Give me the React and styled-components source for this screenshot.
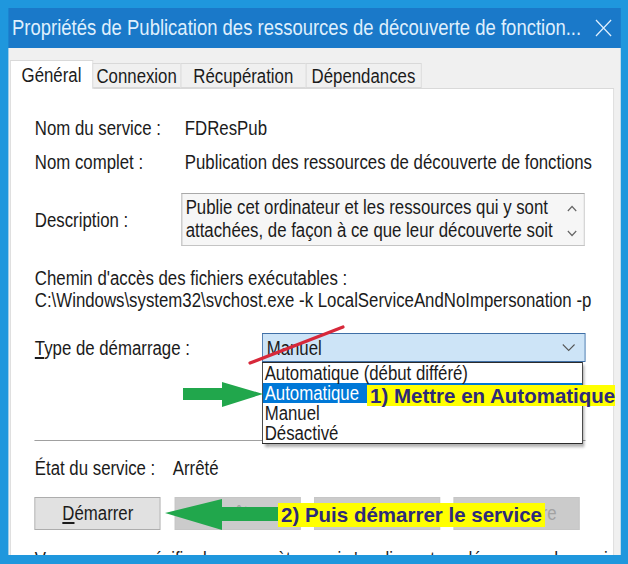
import React from "react";
import styled, { createGlobalStyle } from "styled-components";

/* The reference is a horizontally squeezed screenshot: the dialog is laid
   out at full width on a stage and squeezed by S. */
const S = 0.84;
const u = (x) => `${(x / S).toFixed(2)}px`;

const Global = createGlobalStyle`
  html, body { margin: 0; padding: 0; background: #1f97dd; overflow: hidden; }
  #root { width: 628px; height: 564px; }
`;

const Frame = styled.div`
  position: relative;
  width: 628px;
  height: 564px;
  overflow: hidden;
  background: #1f97dd;
`;

const Stage = styled.div`
  width: ${u(628)};
  height: 564px;
  box-sizing: border-box;
  padding: 8px ${u(7)} 9px ${u(8)};
  transform: scaleX(${S});
  transform-origin: 0 0;
  display: flex;
  flex-direction: column;
  font-family: "Liberation Sans", Arial, sans-serif;
  color: #1b1b1b;
`;

const TitleBar = styled.div`
  height: 40px;
  flex: none;
  background: #1a79c9;
  display: flex;
  align-items: center;
  justify-content: space-between;
  padding: 0 ${u(9)} 0 ${u(4)};
`;

const Title = styled.span`
  font-size: 22px;
  color: #dfeffd;
  white-space: nowrap;
`;

const Body = styled.div`
  flex: 1;
  min-height: 0;
  background: #f0f0f0;
  padding: 12px ${u(7)} 0 ${u(2)};
  display: flex;
  flex-direction: column;
  overflow: hidden;
`;

const TabRow = styled.div`
  display: flex;
  align-items: flex-end;
  height: 28px;
  flex: none;
  position: relative;
  z-index: 1;
`;

const Tab = styled.div`
  box-sizing: border-box;
  width: ${(p) => u(p.$w)};
  height: ${(p) => (p.$active ? 29 : 25)}px;
  margin-bottom: ${(p) => (p.$active ? -1 : 0)}px;
  margin-left: ${(p) => (p.$first ? 0 : -1)}px;
  background: ${(p) => (p.$active ? "#ffffff" : "#f0f0f0")};
  border: 1px solid #d9d9d9;
  border-bottom: ${(p) => (p.$active ? "none" : "1px solid #d9d9d9")};
  font-size: 20px;
  display: flex;
  align-items: center;
  justify-content: center;
  padding-top: ${(p) => (p.$active ? 0 : 1)}px;
`;

const Panel = styled.div`
  flex: 1;
  background: #ffffff;
  border: 1px solid #d9d9d9;
  padding: 0 ${u(28)} 0 ${u(24)};
  position: relative;
  display: flex;
  flex-direction: column;
  font-size: 20px;
`;

const Row = styled.div`
  display: flex;
  align-items: center;
  margin-top: ${(p) => p.$mt}px;
  line-height: 24px;
  white-space: nowrap;
`;

const Label = styled.div`
  width: ${(p) => u(p.$w)};
  flex: none;
`;

const Line = styled.div`
  margin-top: ${(p) => p.$mt || 0}px;
  line-height: 22px;
  white-space: nowrap;
`;

const TextBox = styled.div`
  width: ${u(403)};
  height: 53px;
  box-sizing: border-box;
  border: 1px solid #c4c4c4;
  border-top-color: #a9a9a9;
  border-left-color: #a9a9a9;
  background: #f6f6f6;
  display: flex;
  line-height: 23px;
`;

const TextBoxText = styled.div`
  flex: 1;
  padding: 2px 0 0 ${u(3)};
  white-space: nowrap;
  overflow: hidden;
`;

const Scroll = styled.div`
  width: ${u(24)};
  display: flex;
  flex-direction: column;
  align-items: center;
  justify-content: space-between;
  padding: 11px 0 8px;
`;

const U = styled.span`
  text-decoration: underline;
  text-underline-offset: 2px;
`;

const SelectWrap = styled.div`
  position: relative;
  width: ${u(324)};
`;

const Select = styled.div`
  height: 29px;
  box-sizing: border-box;
  border: 1px solid #3f6fa6;
  background: #cde4f7;
  display: flex;
  align-items: center;
  justify-content: space-between;
  padding: 0 ${u(9)} 0 ${u(4)};
`;

const List = styled.div`
  position: absolute;
  top: 29px;
  left: 0;
  width: ${u(321)};
  box-sizing: border-box;
  background: #ffffff;
  border: 1px solid #2b2b2b;
  box-shadow: 3px 3px 3px rgba(0, 0, 0, 0.35);
  z-index: 2;
`;

const Item = styled.div`
  line-height: 20px;
  padding-left: ${u(2)};
  background: ${(p) => (p.$sel ? "#0078d7" : "transparent")};
  color: ${(p) => (p.$sel ? "#ffffff" : "#1b1b1b")};
`;

const Separator = styled.div`
  margin-top: 78px;
  height: 1px;
  background: #a0a0a0;
  flex: none;
`;

const Buttons = styled.div`
  display: flex;
  gap: ${u(13.7)};
  margin-top: 17px;
  flex: none;
`;

const Button = styled.div`
  width: ${u(126)};
  height: 33px;
  box-sizing: border-box;
  border: 1px solid ${(p) => (p.$disabled ? "#c6c6c6" : "#adadad")};
  background: ${(p) => (p.$disabled ? "#cbcbcb" : "#e1e1e1")};
  color: ${(p) => (p.$disabled ? "#a2a2a2" : "#1b1b1b")};
  display: flex;
  align-items: center;
  justify-content: center;
`;

/* annotations drawn over the screenshot, in frame pixels */
const Mark = styled.div`
  position: absolute;
  left: ${(p) => p.$x}px;
  top: ${(p) => p.$y}px;
  line-height: 0;
  z-index: 3;
`;

const Callout = styled.div`
  position: absolute;
  left: ${(p) => p.$x}px;
  top: ${(p) => p.$y}px;
  width: ${(p) => p.$w}px;
  height: ${(p) => p.$h}px;
  box-sizing: border-box;
  padding-left: 3px;
  background: #ffff00;
  color: #2d2a7a;
  font-family: "Liberation Sans", Arial, sans-serif;
  font-weight: bold;
  font-size: 20.5px;
  line-height: ${(p) => p.$h}px;
  white-space: nowrap;
  z-index: 4;
`;

const Chevron = () => (
  <svg width="16" height="9" viewBox="0 0 16 9">
    <path d="M1 1.5 L8 7.5 L15 1.5" fill="none" stroke="#555" strokeWidth="1.3" />
  </svg>
);

const Close = () => (
  <svg width="21" height="18" viewBox="0 0 21 18">
    <path d="M1.5 1 L19.5 17 M19.5 1 L1.5 17" stroke="#dfeffd" strokeWidth="1.6" />
  </svg>
);

const Caret = ({ up }) => (
  <svg width="12" height="7" viewBox="0 0 12 7">
    <path d={up ? "M1 6 L6 1.5 L11 6" : "M1 1 L6 5.5 L11 1"} fill="none" stroke="#666" strokeWidth="1.5" />
  </svg>
);

export default function App() {
  return (
    <>
      <Global />
      <Frame>
        <Stage>
          <TitleBar>
            <Title>Propriétés de Publication des ressources de découverte de fonction...</Title>
            <Close />
          </TitleBar>
          <Body>
            <TabRow>
              <Tab $active $first $w={83}>Général</Tab>
              <Tab $w={89}>Connexion</Tab>
              <Tab $w={126}>Récupération</Tab>
              <Tab $w={116}>Dépendances</Tab>
            </TabRow>
            <Panel>
              <Row $mt={27}>
                <Label $w={150}>Nom du service :</Label>
                <span>FDResPub</span>
              </Row>
              <Row $mt={10}>
                <Label $w={150}>Nom complet :</Label>
                <span>Publication des ressources de découverte de fonctions</span>
              </Row>
              <Row $mt={19}>
                <Label $w={147}>Description :</Label>
                <TextBox>
                  <TextBoxText>
                    Publie cet ordinateur et les ressources qui y sont
                    <br />
                    attachées, de façon à ce que leur découverte soit
                  </TextBoxText>
                  <Scroll>
                    <Caret up />
                    <Caret />
                  </Scroll>
                </TextBox>
              </Row>
              <Line $mt={21}>Chemin d'accès des fichiers exécutables :</Line>
              <Line>C:\Windows\system32\svchost.exe -k LocalServiceAndNoImpersonation -p</Line>
              <Row $mt={22}>
                <Label $w={227}>
                  <U>T</U>ype de démarrage :
                </Label>
                <SelectWrap>
                  <Select>
                    <span>Manuel</span>
                    <Chevron />
                  </Select>
                  <List>
                    <Item>Automatique (début différé)</Item>
                    <Item $sel>Automatique</Item>
                    <Item>Manuel</Item>
                    <Item>Désactivé</Item>
                  </List>
                </SelectWrap>
              </Row>
              <Separator />
              <Row $mt={15}>
                <Label $w={138}>État du service :</Label>
                <span>Arrêté</span>
              </Row>
              <Buttons>
                <Button>
                  <span>
                    <U>D</U>émarrer
                  </span>
                </Button>
                <Button $disabled>Arrêter</Button>
                <Button $disabled>Suspendre</Button>
                <Button $disabled>Reprendre</Button>
              </Buttons>
              <Line $mt={18}>
                Vous pouvez spécifier les paramètres qui s'appliquent au démarrage du service.
              </Line>
            </Panel>
          </Body>
        </Stage>

        <Mark $x={248} $y={325}>
          <svg width="97" height="40" viewBox="0 0 97 40">
            <path d="M2 38 L95 2" stroke="#d7283a" strokeWidth="3.2" strokeLinecap="round" />
          </svg>
        </Mark>
        <Mark $x={180} $y={380}>
          <svg width="85" height="30" viewBox="0 0 85 30">
            <path d="M3 8 L42 8 L42 2 L83 14 L42 27 L42 20 L3 20 Z" fill="#21a74c" />
          </svg>
        </Mark>
        <Callout $x={367} $y={385} $w={248} $h={21}>
          1) Mettre en Automatique
        </Callout>
        <Mark $x={163} $y={496}>
          <svg width="118" height="36" viewBox="0 0 118 36">
            <path d="M117 11 L59 11 L59 3 L2 17 L59 34 L59 25 L117 25 Z" fill="#21a74c" />
          </svg>
        </Mark>
        <Callout $x={278} $y={503} $w={267} $h={24}>
          2) Puis démarrer le service
        </Callout>
      </Frame>
    </>
  );
}
